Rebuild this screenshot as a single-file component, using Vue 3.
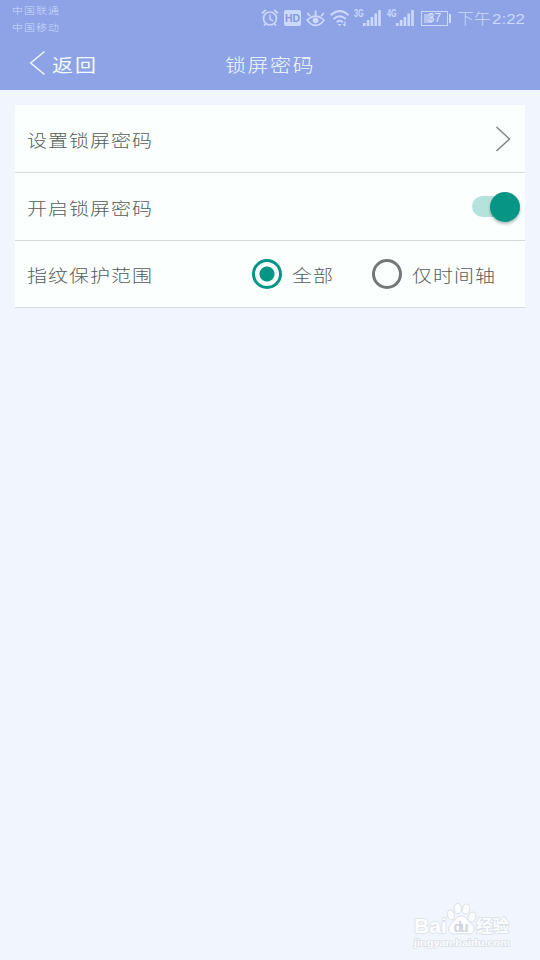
<script setup>
import { ref } from 'vue'

const enabled = ref(true)
const scope = ref('all')
const options = [
  { value: 'all', label: '全部' },
  { value: 'timeline', label: '仅时间轴' },
]
const bars = [3, 6, 9, 12.5, 16]
</script>

<template>
  <div class="screen">
    <header class="header">
      <div class="status">
        <div class="carriers">
          <span>中国联通</span>
          <span>中国移动</span>
        </div>
        <div class="indicators">
          <svg class="icon alarm" width="18" height="20" viewBox="0 0 18 20" fill="none" stroke="currentColor">
            <circle cx="9" cy="10.5" r="6.5" stroke-width="1.7" />
            <path d="M9 6.5v4.5l3 1.8" stroke-width="1.4" />
            <path d="M1 5.3 4.8 2M17 5.3 13.2 2" stroke-width="1.8" />
            <path d="M4.8 15.5 3 17.7M13.2 15.5l1.8 2.2" stroke-width="1.5" />
          </svg>
          <span class="hd">HD</span>
          <svg class="icon eye" width="20" height="20" viewBox="0 0 20 20" fill="none" stroke="currentColor">
            <path d="M1.2 12.2Q9.6 4.2 18 12.2Q9.6 22.6 1.2 12.2Z" stroke-width="1.6" />
            <circle cx="9.6" cy="12.3" r="2.9" fill="currentColor" stroke="none" />
            <path d="M9.6 7.5V2.6M4 8 1.4 5M15.2 8l2.6-3" stroke-width="1.8" />
          </svg>
          <svg class="icon wifi" width="20" height="20" viewBox="0 0 20 20" fill="none" stroke="currentColor" stroke-width="2">
            <path d="M.6 7.2Q10-1 18.4 7.2" />
            <path d="M3.6 11Q9.8 5.5 15.8 11" />
            <path d="M6.8 14.2Q9.8 11.3 12.8 14.2" />
            <path d="m7.6 16 2 2.2 2-2.2z" fill="currentColor" stroke="none" />
            <path d="M15 13.5v4.5M13.2 16.2l1.8 1.8" stroke-width="1.2" />
          </svg>
          <div v-for="net in ['3G', '4G']" :key="net" class="network">
            <span>{{ net }}</span>
            <svg width="19" height="17" viewBox="0 0 19 17" fill="currentColor">
              <rect v-for="(h, i) in bars" :key="i" :x="i * 3.8" :y="17 - h" width="2.6" :height="h" />
            </svg>
          </div>
          <div class="battery"><span>37</span></div>
          <svg class="clock" width="69" height="22" viewBox="0 0 69 22" fill="currentColor">
            <text class="period" x="0" y="15.5" textLength="34" lengthAdjust="spacingAndGlyphs">下午</text>
            <text class="time" x="35" y="15.5" textLength="33" lengthAdjust="spacingAndGlyphs">2:22</text>
          </svg>
        </div>
      </div>
      <nav class="nav">
        <button class="back">
          <svg width="16" height="26" viewBox="0 0 16 26" fill="none" stroke="currentColor" stroke-width="1.4">
            <path d="M15.5 1.5 1.7 13l13.8 11.5" />
          </svg>
          <span class="brush">返回</span>
        </button>
        <h1 class="brush">锁屏密码</h1>
      </nav>
    </header>

    <main class="card">
      <div class="row">
        <span class="brush label">设置锁屏密码</span>
        <svg class="chevron" width="16" height="28" viewBox="0 0 16 28" fill="none" stroke="#7e8484" stroke-width="1.5">
          <path d="M1.5 2 14.5 14 1.5 26" />
        </svg>
      </div>
      <div class="row">
        <span class="brush label">开启锁屏密码</span>
        <button class="switch" :class="{ on: enabled }" @click="enabled = !enabled"><i></i></button>
      </div>
      <div class="row last">
        <span class="brush label">指纹保护范围</span>
        <div class="options">
          <label v-for="o in options" :key="o.value" class="option">
            <input v-model="scope" type="radio" :value="o.value" />
            <span class="brush label">{{ o.label }}</span>
          </label>
        </div>
      </div>
    </main>

    <footer class="watermark">
      <svg width="104" height="50" viewBox="0 0 104 50" fill="#fcfdff" stroke="#dbe0e7" stroke-width="1.6" stroke-linejoin="round">
        <text x="3" y="32" class="wordmark" textLength="33" lengthAdjust="spacingAndGlyphs">Bai</text>
        <g stroke-width="1">
          <ellipse cx="40" cy="14" rx="3.6" ry="5" transform="rotate(-20 40 14)" />
          <ellipse cx="46.8" cy="7.5" rx="3.7" ry="5.1" />
          <ellipse cx="55.2" cy="8" rx="3.7" ry="5.1" transform="rotate(10 55.2 8)" />
          <ellipse cx="61" cy="16" rx="3.7" ry="5" transform="rotate(20 61 16)" />
          <path d="M50.3 15C45 15 44 20 40.5 22.5C36 26 37 33 43.5 33C48 33 52 32.5 57 33C64 33 65 26 60.5 23C57 20.5 56 15 50.3 15Z" />
        </g>
        <text x="42.5" y="30.5" class="du" fill="#d0d6de" stroke="none" textLength="15">du</text>
        <text x="65" y="31" class="chinese" textLength="33" lengthAdjust="spacingAndGlyphs">经验</text>
        <text x="3" y="44.5" class="domain" textLength="96" lengthAdjust="spacingAndGlyphs">jingyan.baidu.com</text>
      </svg>
    </footer>
  </div>
</template>

<style>
body {
  background: #f1f6fe;
}
</style>

<style scoped>
.screen {
  box-sizing: border-box;
  height: 960px;
  display: flex;
  flex-direction: column;
  background: #f1f6fe;
  font-family: "Liberation Sans", "Noto Sans CJK SC", sans-serif;
  overflow: hidden;
}
.header {
  height: 90px;
  background: #8da3e6;
  color: #f2fbff;
}
.status {
  height: 38px;
  display: flex;
  justify-content: space-between;
  color: #cbd9fb;
}
.carriers {
  display: flex;
  flex-direction: column;
  padding: 2px 0 0 12px;
  font: 300 11px/16.5px "Noto Sans CJK SC", sans-serif;
  letter-spacing: 1px;
}
.carriers span {
  transform: scaleY(0.86);
}
.indicators {
  display: flex;
  align-items: flex-start;
  padding: 8px 14px 0 0;
}
.icon {
  flex: none;
}
.alarm {
  margin-right: 5px;
}
.hd {
  width: 17px;
  height: 16px;
  margin: 2px 5px 0 0;
  border-radius: 2px;
  background: #cbd9fb;
  color: #8399dc;
  font: bold 10.5px/16px "Liberation Sans", sans-serif;
  text-align: center;
}
.eye {
  margin-right: 4px;
}
.wifi {
  margin-right: 4px;
}
.network {
  display: flex;
  align-items: flex-start;
  width: 32.5px;
}
.network span {
  width: 10px;
  flex: none;
  margin-right: -1px;
  font: bold 10px/12px "Liberation Sans", sans-serif;
  transform: scaleX(0.72);
  transform-origin: left;
}
.network svg {
  flex: none;
  margin-top: 1px;
}
.battery {
  position: relative;
  box-sizing: border-box;
  width: 27px;
  height: 15px;
  margin: 3px 9px 0 2px;
  border: 1px solid #cbd9fb;
  background: linear-gradient(90deg, #b2c4f4 8px, transparent 8px) 2px 2px / 21px 9px no-repeat;
  color: #dbe6ff;
  font: 12px/13px "Liberation Sans", sans-serif;
  text-align: center;
}
.battery::after {
  content: "";
  position: absolute;
  right: -4px;
  top: 2px;
  width: 2px;
  height: 9px;
  background: #cbd9fb;
}
.clock {
  flex: none;
}
.period {
  font: 300 15px "Noto Sans CJK SC", sans-serif;
}
.time {
  font: 15px "Liberation Sans", sans-serif;
}
.nav {
  height: 52px;
  display: grid;
  grid-template-columns: 1fr auto 1fr;
  align-items: center;
}
.back {
  display: flex;
  align-items: center;
  gap: 7px;
  padding: 0 0 2px 29px;
  border: 0;
  background: none;
  color: inherit;
}
.brush {
  font: 300 20px/26px "Noto Sans CJK SC", sans-serif;
  letter-spacing: 1px;
  white-space: nowrap;
  transform: scaleY(0.86);
}
.back .brush {
  margin-top: 2px;
  font-size: 21px;
  font-weight: 400;
  letter-spacing: 2px;
}
h1.brush {
  margin: 0;
  font-size: 21px;
  letter-spacing: 1.5px;
}
.card {
  margin: 15px 15px 0;
  background: #fbfffe;
}
.row {
  box-sizing: border-box;
  height: 68px;
  display: flex;
  align-items: center;
  justify-content: space-between;
  padding: 0 5px 0 12px;
  border-bottom: 1px solid #d5dadd;
}
.row.last {
  height: 67px;
}
.label {
  margin-top: 3px;
  color: #555c5b;
}
.last .label {
  margin-top: 2px;
}
.chevron {
  margin-right: 9px;
}
.switch {
  position: relative;
  display: flex;
  width: 48px;
  height: 30px;
  padding: 0;
  border: 0;
  background: none;
}
.switch::before {
  content: "";
  position: absolute;
  inset: 4px 4px 5px 0;
  border-radius: 11px;
  background: #d0d3d3;
}
.switch.on::before {
  background: #b5e3dc;
}
.switch i {
  position: relative;
  width: 30px;
  height: 30px;
  border-radius: 50%;
  background: #f5f5f5;
  box-shadow: 0 2px 3px rgba(40, 80, 75, 0.4);
}
.switch.on i {
  margin-left: 18px;
  background: #079686;
}
.options {
  display: flex;
  gap: 38px;
  padding-right: 24px;
}
.option {
  display: flex;
  align-items: center;
  gap: 10px;
}
.option input {
  appearance: none;
  box-sizing: border-box;
  width: 30px;
  height: 30px;
  margin: 0;
  border: 3px solid #727777;
  border-radius: 50%;
}
.option input:checked {
  border-color: #079686;
  background: radial-gradient(circle, #079686 7px, transparent 8px);
}
.watermark {
  display: flex;
  justify-content: flex-end;
  margin-top: auto;
  padding: 0 25px 9px 0;
}
.watermark text {
  paint-order: stroke;
}
.wordmark {
  font: bold 21px "Liberation Sans", sans-serif;
}
.du {
  font: bold 14px "Liberation Sans", sans-serif;
}
.chinese {
  font: bold 16.5px "Noto Sans CJK SC", sans-serif;
}
.domain {
  font: bold 9.5px "Liberation Sans", sans-serif;
}
</style>
